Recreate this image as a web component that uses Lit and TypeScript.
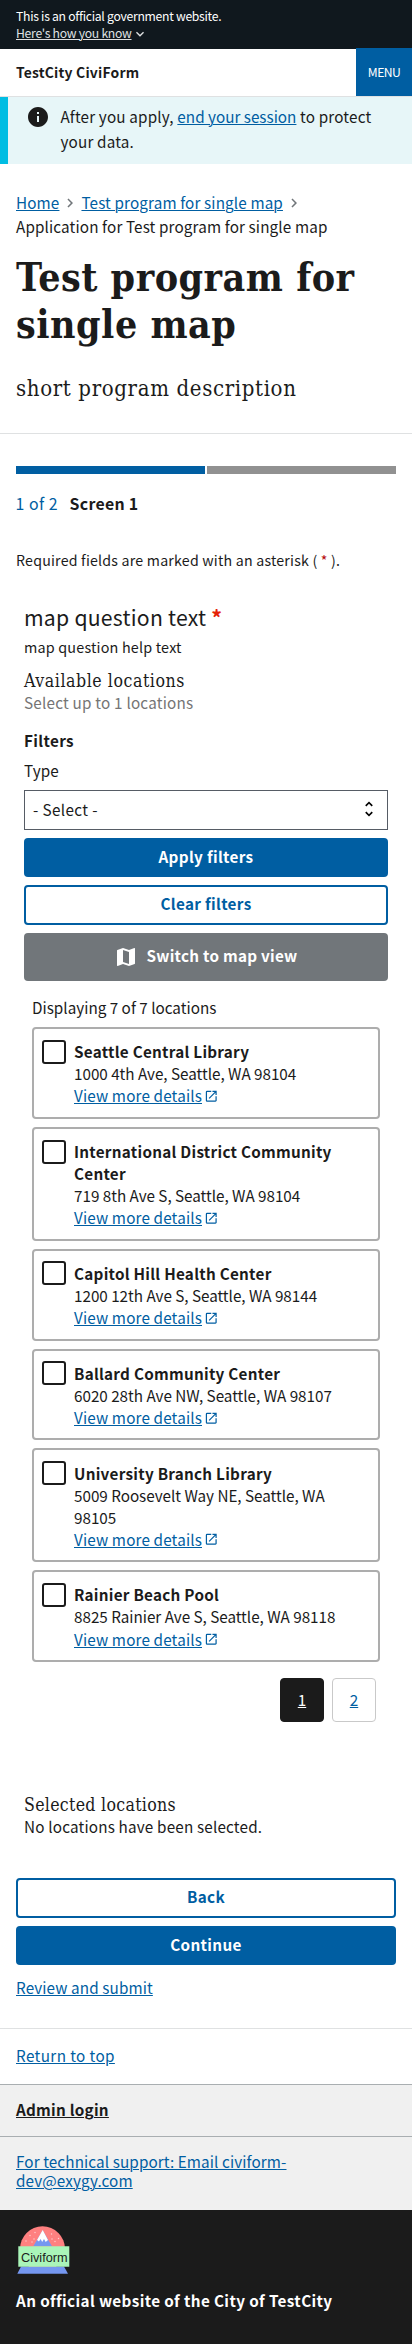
import { LitElement, html, css } from "lit";

interface Place {
  name: string;
  address: string;
}

const PLACES: Place[] = [
  { name: "Seattle Central Library", address: "1000 4th Ave, Seattle, WA 98104" },
  { name: "International District Community Center", address: "719 8th Ave S, Seattle, WA 98104" },
  { name: "Capitol Hill Health Center", address: "1200 12th Ave S, Seattle, WA 98144" },
  { name: "Ballard Community Center", address: "6020 28th Ave NW, Seattle, WA 98107" },
  { name: "University Branch Library", address: "5009 Roosevelt Way NE, Seattle, WA 98105" },
  { name: "Rainier Beach Pool", address: "8825 Rainier Ave S, Seattle, WA 98118" },
];

const base = css`
  * { box-sizing: border-box; margin: 0; padding: 0; }
  a {
    color: #005ea2;
    text-decoration: underline;
    text-decoration-thickness: 1px;
    text-underline-offset: 1px;
  }
  svg { display: block; flex: none; }
`;

class LocationCard extends LitElement {
  static properties = { place: { attribute: false } };
  declare place: Place;

  static styles = [base, css`
    :host { display: block; }
    .card {
      display: flex;
      gap: 8px;
      border: 2px solid #adadad;
      border-radius: 4px;
      padding: 11.2px 18px 10.5px 8px;
    }
    .box {
      flex: none;
      width: 24px;
      height: 24px;
      margin-top: -0.4px;
      border: 2px solid #1b1b1b;
      border-radius: 3px;
    }
    .info { line-height: 22.05px; }
    .name { font-weight: 700; letter-spacing: 0.26px; }
    .addr { letter-spacing: -0.03px; }
    .more { display: flex; align-items: center; gap: 2px; letter-spacing: 0.14px; }
    .more svg { margin-top: 2px; }
  `];

  render() {
    return html`<div class="card">
      <span class="box"></span>
      <div class="info">
        <div class="name">${this.place.name}</div>
        <div class="addr">${this.place.address}</div>
        <div class="more"><a>View more details</a>
          <svg width="14.5" height="14.5" viewBox="0 0 24 24" fill="#005ea2"><path d="M19 19H5V5h7V3H5a2 2 0 0 0-2 2v14a2 2 0 0 0 2 2h14c1.1 0 2-.9 2-2v-7h-2v7zM14 3v2h3.59l-9.83 9.83 1.41 1.41L19 6.41V10h2V3h-7z"/></svg>
        </div>
      </div>
    </div>`;
  }
}
customElements.define("location-card", LocationCard);

class AppRoot extends LitElement {
  static styles = [base, css`
    :host {
      display: block;
      width: 412px;
      font-family: "Noto Sans CJK SC", "Noto Sans", sans-serif;
      font-size: 15.27px;
      line-height: 22px;
      color: #1b1b1b;
      background: #fff;
    }
    .serif { font-family: "DejaVu Serif Condensed", "DejaVu Serif", serif; font-weight: 400; }
    .banner {
      height: 49px;
      padding: 7.5px 16px 0;
      background: #10181e;
      color: #fff;
      font-size: 12.2px;
      line-height: 16px;
      letter-spacing: -0.28px;
    }
    .know { display: flex; align-items: center; }
    .know a { color: #dfe1e2; }
    .know svg { margin-top: 2px; }
    .header {
      display: flex;
      justify-content: space-between;
      height: 48px;
      border-bottom: 1px solid #dfe1e2;
    }
    .site { padding: 11px 0 0 16px; font-size: 13.9px; line-height: 24px; font-weight: 700; letter-spacing: 0.2px; }
    .menu {
      display: grid;
      place-items: center;
      width: 56px;
      height: 48px;
      margin-top: -1px;
      background: #005ea2;
      color: #fff;
      font-size: 12.2px;
      letter-spacing: -0.6px;
    }
    .alert {
      display: flex;
      gap: 12px;
      height: 67px;
      padding: 7px 20px 0;
      border-left: 8px solid #00bde3;
      background: #e7f6f8;
      line-height: 25px;
      letter-spacing: 0.16px;
    }
    .alert svg { margin: 1px -2px 0 -2px; }
    .alert a { letter-spacing: 0; }
    .alert div { margin-left: 0.5px; }
    .crumbs {
      display: flex;
      flex-wrap: wrap;
      align-items: center;
      padding: 26px 16px 0;
      line-height: 24.3px;
      letter-spacing: 0.12px;
    }
    .crumbs svg { margin: 2px 2px 0; }
    h1 { padding: 15.4px 16px 0; font-size: 39px; line-height: 47px; letter-spacing: 0.5px; }
    h1.serif { font-weight: 700; }
    .desc {
      height: 86px;
      padding: 26.5px 16px 0;
      border-bottom: 1px solid #dfe1e2;
      font-size: 22px;
      line-height: 30px;
      letter-spacing: 0.64px;
    }
    .steps { display: grid; grid-template-columns: 1fr 1fr; gap: 2px; padding: 32px 16px 0; }
    .step { height: 8px; background: #919191; }
    .step.on { background: #005ea2; }
    .label { display: flex; gap: 12px; padding: 17.5px 16px 0; font-size: 15.9px; line-height: 26px; }
    .count { color: #005ea2; letter-spacing: 0.5px; margin-left: -0.5px; }
    .screen { font-weight: 700; letter-spacing: 0.27px; margin-left: -0.5px; }
    .required { padding: 31.5px 16px 0; font-size: 14.2px; letter-spacing: 0.21px; }
    .star { color: #b50909; }
    .question { padding: 31px 24px 0; }
    .qtext { font-size: 21.2px; line-height: 30px; letter-spacing: 0.24px; }
    .qtext b { color: #e52207; }
    .help { margin-top: 4px; font-size: 14.4px; letter-spacing: 0.17px; }
    .sub { font-size: 17.6px; line-height: 21px; letter-spacing: 0.56px; }
    .avail { margin-top: 13px; }
    .limit { margin-top: -1px; color: #757575; letter-spacing: 0.2px; }
    .filters { margin-top: 16px; font-weight: 700; letter-spacing: 0.35px; }
    .type { margin-top: 8px; letter-spacing: 0.1px; }
    .select {
      display: flex;
      align-items: center;
      justify-content: space-between;
      height: 40px;
      margin-top: 9px;
      padding: 0 8px 1px 8px;
      border: 1px solid #565c65;
      letter-spacing: 0.38px;
    }
    .btn {
      display: flex;
      align-items: center;
      justify-content: center;
      height: 40px;
      margin-top: 8px;
      padding-bottom: 3px;
      border-radius: 4px;
      background: #005ea2;
      color: #fff;
      font-weight: 700;
      letter-spacing: 0.33px;
    }
    .btn.solid { height: 39px; }
    .btn.outline { background: #fff; color: #005ea2; border: 2px solid #005ea2; }
    .btn.map { height: 48px; gap: 8px; background: #71767a; letter-spacing: 0.26px; }
    .btn.map svg { margin-top: 3px; }
    .list { display: grid; gap: 8px; margin: 9px 8px 0; }
    .shown { margin: 15px 8px 0; }
    .pages { display: flex; justify-content: flex-end; gap: 8px; margin: 15.8px 12px 0; }
    .page {
      display: grid;
      place-items: center;
      width: 44px;
      height: 44px;
      padding-bottom: 1px;
      border: 1px solid #c9c9c9;
      border-radius: 4px;
    }
    .page.current { background: #1b1b1b; border-color: #1b1b1b; color: #fff; }
    .chosen { margin-top: 73px; letter-spacing: 0.3px; }
    .none { margin-top: -1px; letter-spacing: 0.17px; }
    .nav { padding: 33px 16px 0; }
    .review { margin-top: 11.5px; letter-spacing: 0.1px; }
    .top { margin-top: 29.5px; height: 56px; padding: 15px 16px 0; border-top: 1px solid #dfe1e2; letter-spacing: 0.38px; }
    .admin {
      height: 53px;
      padding: 13.5px 16px 0;
      border: solid #a9aeb1;
      border-width: 1px 0;
      background: #f0f0f0;
      font-weight: 700;
      letter-spacing: 0.25px;
    }
    .admin a { color: #1b1b1b; }
    .support { height: 73px; padding: 14.7px 16px 0; background: #f0f0f0; line-height: 19.3px; letter-spacing: 0.1px; }
    .foot { height: 134px; padding: 15px 16px 0; background: #1b1b1b; color: #fff; font-weight: 700; letter-spacing: 0.37px; }
    .official { margin-top: 14px; }
    .brand { font-family: "Liberation Sans", Arial, sans-serif; font-weight: 400; letter-spacing: 0; }
  `];

  chevron() {
    return html`<svg width="18" height="18" viewBox="0 0 24 24" fill="#71767a"><path d="M10 6 8.59 7.41 13.17 12l-4.58 4.59L10 18l6-6z"/></svg>`;
  }

  render() {
    return html`
      <div class="banner">
        <div>This is an official government website.</div>
        <div class="know"><a>Here's how you know</a>
          <svg width="16" height="16" viewBox="0 0 24 24" fill="#dfe1e2"><path d="M16.590 8.590 12 13.170 7.410 8.590 6 10l6 6 6-6z"/></svg>
        </div>
      </div>
      <div class="header"><div class="site">TestCity CiviForm</div><div class="menu">MENU</div></div>
      <div class="alert">
        <svg width="24" height="24" viewBox="0 0 24 24" fill="#1b1b1b"><path d="M12 2C6.480 2 2 6.480 2 12s4.480 10 10 10 10-4.480 10-10S17.520 2 12 2zm1 15h-2v-6h2v6zm0-8h-2V7h2v2z"/></svg>
        <div>After you apply, <a>end your session</a> to protect your data.</div>
      </div>
      <div class="crumbs">
        <a>Home</a>${this.chevron()}<a>Test program for single map</a>${this.chevron()}
        <span>Application for Test program for single map</span>
      </div>
      <h1 class="serif">Test program for single map</h1>
      <div class="desc serif">short program description</div>
      <div class="steps"><div class="step on"></div><div class="step"></div></div>
      <div class="label"><span class="count">1 of 2</span><span class="screen">Screen 1</span></div>
      <div class="required">Required fields are marked with an asterisk ( <span class="star">*</span> ).</div>
      <div class="question">
        <div class="qtext">map question text <b>*</b></div>
        <div class="help">map question help text</div>
        <div class="sub avail serif">Available locations</div>
        <div class="limit">Select up to 1 locations</div>
        <div class="filters">Filters</div>
        <div class="type">Type</div>
        <div class="select"><span>- Select -</span>
          <svg width="20" height="20" viewBox="0 0 24 24"><path d="M12 5.830 15.170 9l1.410-1.410L12 3 7.410 7.590 8.830 9 12 5.830zm0 12.340L8.830 15l-1.410 1.410L12 21l4.590-4.590L15.170 15 12 18.170z"/></svg>
        </div>
        <div class="btn solid">Apply filters</div>
        <div class="btn outline">Clear filters</div>
        <div class="btn map">
          <svg width="24" height="24" viewBox="0 0 24 24" fill="#fff"><path d="m20.500 3-.16.03L15 5.100 9 3 3.360 4.900c-.21.07-.36.25-.36.48V20.500c0 .28.22.5.5.5l.16-.03L9 18.900l6 2.100 5.640-1.900c.21-.07.36-.25.36-.48V3.500c0-.28-.22-.5-.5-.5zM15 19l-6-2.110V5l6 2.110V19z"/></svg>
          <span>Switch to map view</span>
        </div>
        <div class="shown">Displaying 7 of 7 locations</div>
        <div class="list">${PLACES.map((p) => html`<location-card .place=${p}></location-card>`)}</div>
        <div class="pages"><a class="page current">1</a><a class="page">2</a></div>
        <div class="sub chosen serif">Selected locations</div>
        <div class="none">No locations have been selected.</div>
      </div>
      <div class="nav">
        <div class="btn outline">Back</div>
        <div class="btn solid">Continue</div>
        <div class="review"><a>Review and submit</a></div>
      </div>
      <div class="top"><a>Return to top</a></div>
      <div class="admin"><a>Admin login</a></div>
      <div class="support"><a>For technical support: Email civiform-<br>dev@exygy.com</a></div>
      <div class="foot">
        <svg width="56" height="50" viewBox="0 0 56 50">
          <circle cx="26.5" cy="23.8" r="22.5" fill="#ff8080"/>
          <path d="M17.300 21.300 26.700 5.300l9.300 16z" fill="#7597f0"/>
          <path d="M26.700 5 32 15l-2.300 2-1.700-3-1.800 3-1.600-3-1.600 2.500-2-1.500z" fill="#fff"/>
          <g fill="#ffd0d0"><circle cx="19" cy="7.500" r=".7"/><circle cx="14" cy="10.500" r=".7"/><circle cx="18" cy="14" r=".7"/><circle cx="10" cy="16" r=".7"/><circle cx="16" cy="17" r=".7"/><circle cx="35.500" cy="9" r=".7"/><circle cx="42.500" cy="13.500" r=".7"/><circle cx="36" cy="14" r=".7"/><circle cx="39" cy="16.500" r=".7"/></g>
          <path d="M5 41.500h43l4 7.200H1.300z" fill="#7597f0"/>
          <path d="M2.300 21.300h51v20.400h-51z" fill="#aaf5b9"/>
          <text class="brand" x="5" y="36.700" font-size="12.700" fill="#1b1b1b" textLength="46.500">Civiform</text>
        </svg>
        <div class="official">An official website of the City of TestCity</div>
      </div>
    `;
  }
}
customElements.define("app-root", AppRoot);
